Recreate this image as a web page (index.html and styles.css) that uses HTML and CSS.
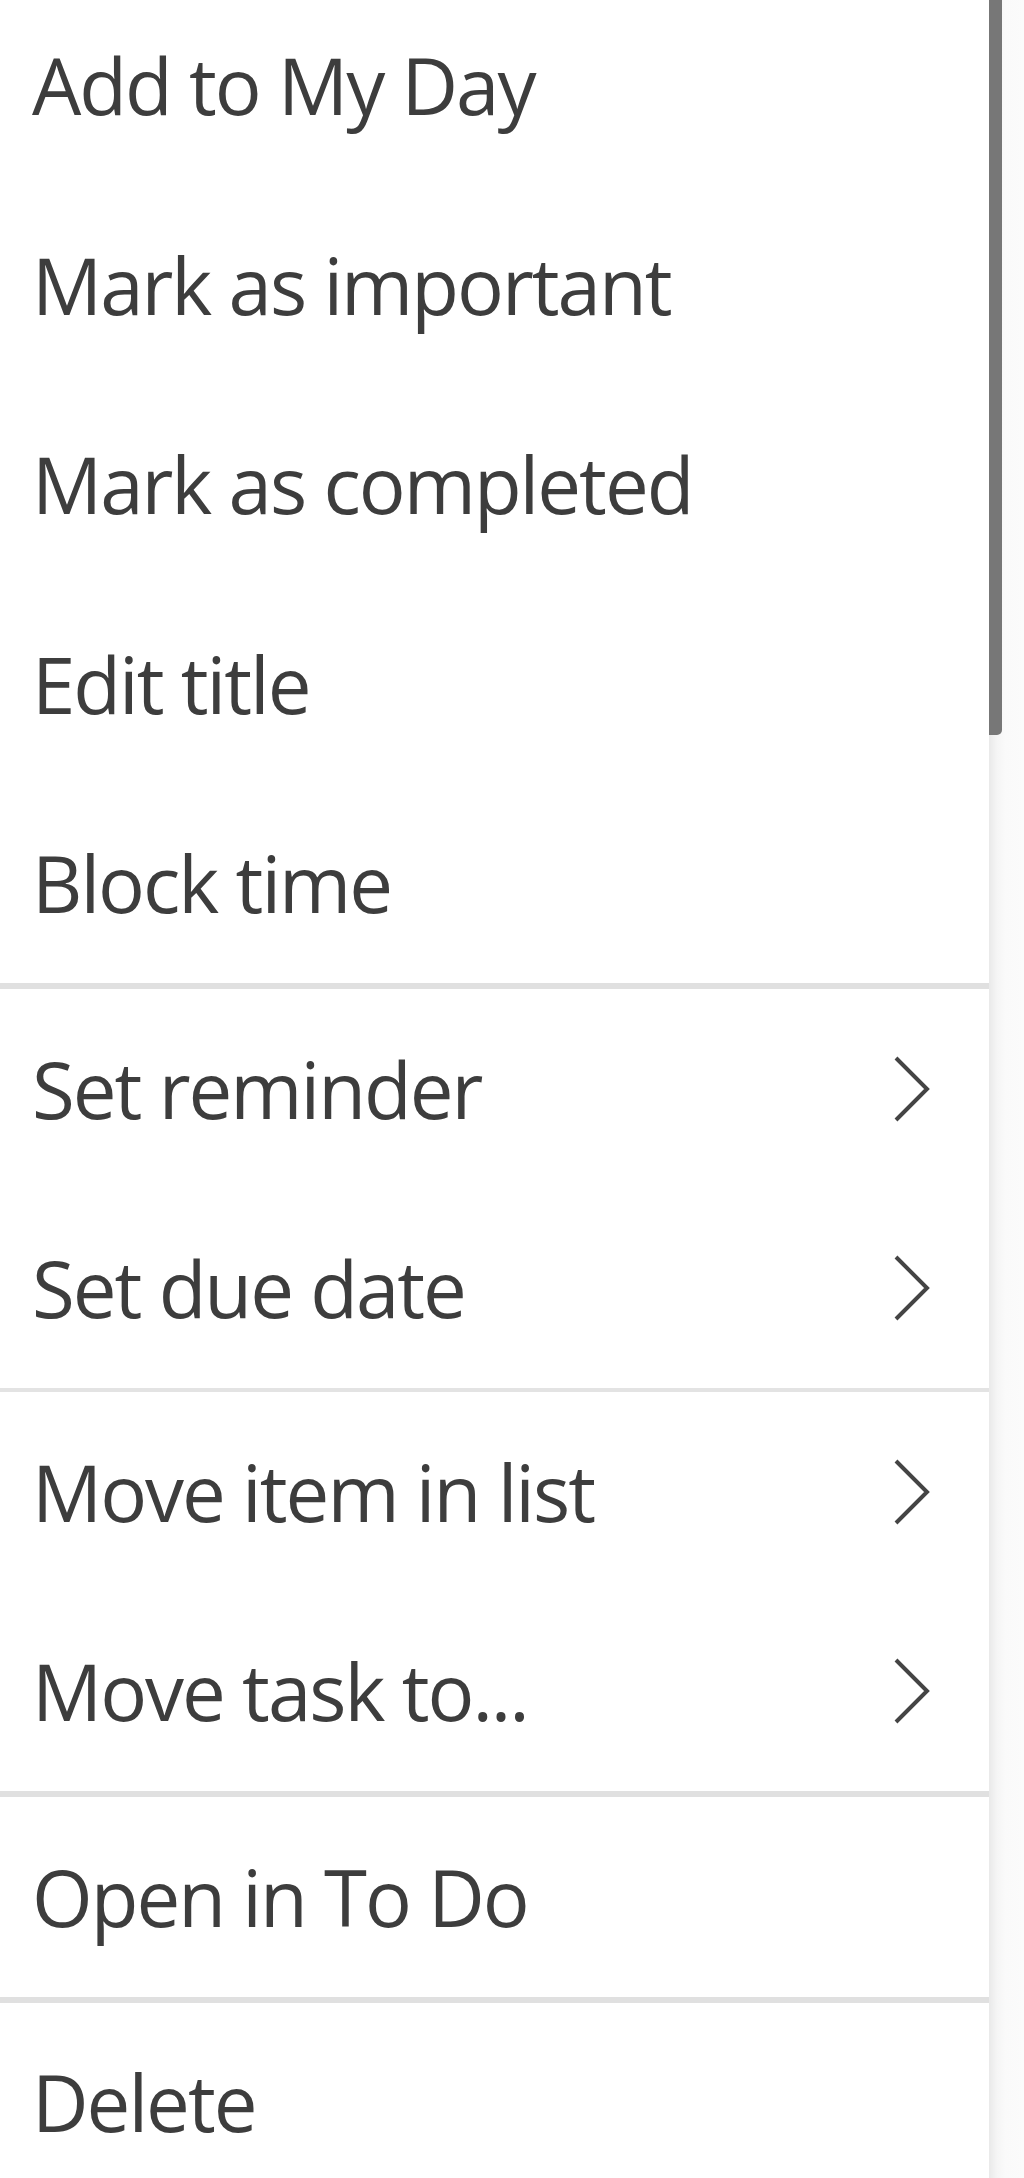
FILE: index.html
```html
<!DOCTYPE html>
<html lang="en">
<head>
<meta charset="utf-8">
<title>Task menu</title>
<link rel="stylesheet" href="styles.css">
</head>
<body>
<div class="frame">
  <div class="menu">
    <div class="group group-first">
      <div class="item"><span class="label">Add to My Day</span></div>
      <div class="item"><span class="label">Mark as important</span></div>
      <div class="item"><span class="label">Mark as completed</span></div>
      <div class="item"><span class="label">Edit title</span></div>
      <div class="item"><span class="label">Block time</span></div>
    </div>
    <div class="divider"></div>
    <div class="group">
      <div class="item"><span class="label">Set reminder</span>
        <svg class="chev" viewBox="0 0 36 66" aria-hidden="true"><polyline points="2,2 33,33 2,64"/></svg></div>
      <div class="item"><span class="label">Set due date</span>
        <svg class="chev" viewBox="0 0 36 66" aria-hidden="true"><polyline points="2,2 33,33 2,64"/></svg></div>
    </div>
    <div class="divider divider-thin"></div>
    <div class="group">
      <div class="item"><span class="label">Move item in list</span>
        <svg class="chev" viewBox="0 0 36 66" aria-hidden="true"><polyline points="2,2 33,33 2,64"/></svg></div>
      <div class="item"><span class="label">Move task to...</span>
        <svg class="chev" viewBox="0 0 36 66" aria-hidden="true"><polyline points="2,2 33,33 2,64"/></svg></div>
    </div>
    <div class="divider"></div>
    <div class="group">
      <div class="item"><span class="label">Open in To Do</span></div>
    </div>
    <div class="divider"></div>
    <div class="group">
      <div class="item"><span class="label">Delete</span></div>
    </div>
  </div>
  <div class="scrollbar">
    <div class="thumb"></div>
  </div>
</div>
</body>
</html>
```

FILE: styles.css
```css
html, body {
  margin: 0;
  padding: 0;
  background: #ffffff;
}
body {
  width: 1024px;
  height: 2178px;
  overflow: hidden;
  font-family: "Open Sans", "Noto Sans", "Liberation Sans", sans-serif;
  color: #3d3d3d;
}
.frame {
  display: flex;
  width: 1024px;
  height: 2178px;
  overflow: hidden;
}
.menu {
  flex: 1;
  min-width: 0;
  display: flex;
  flex-direction: column;
}
.group-first {
  margin-top: -14.5px;
}
.item {
  height: 199.5px;
  display: flex;
  align-items: center;
  justify-content: space-between;
  padding: 0 59px 0 32px;
  box-sizing: border-box;
  flex-shrink: 0;
}
.label {
  font-size: 78px;
  line-height: 1;
  white-space: nowrap;
  letter-spacing: -2px;
}
.chev {
  width: 36px;
  height: 66px;
  fill: none;
  stroke: #444444;
  stroke-width: 4;
  flex-shrink: 0;
}
.divider {
  height: 6px;
  background: #e0e0e0;
  flex-shrink: 0;
}
.divider-thin {
  height: 4px;
  background: #e3e3e3;
}
.scrollbar {
  width: 35px;
  flex-shrink: 0;
  background: linear-gradient(to right, #e9e9e9 0px, #f5f5f5 8px, #fafafa 16px, #fbfbfb 100%);
}
.thumb {
  width: 13px;
  height: 735px;
  background: #777777;
  border-bottom-right-radius: 5px;
}
```
